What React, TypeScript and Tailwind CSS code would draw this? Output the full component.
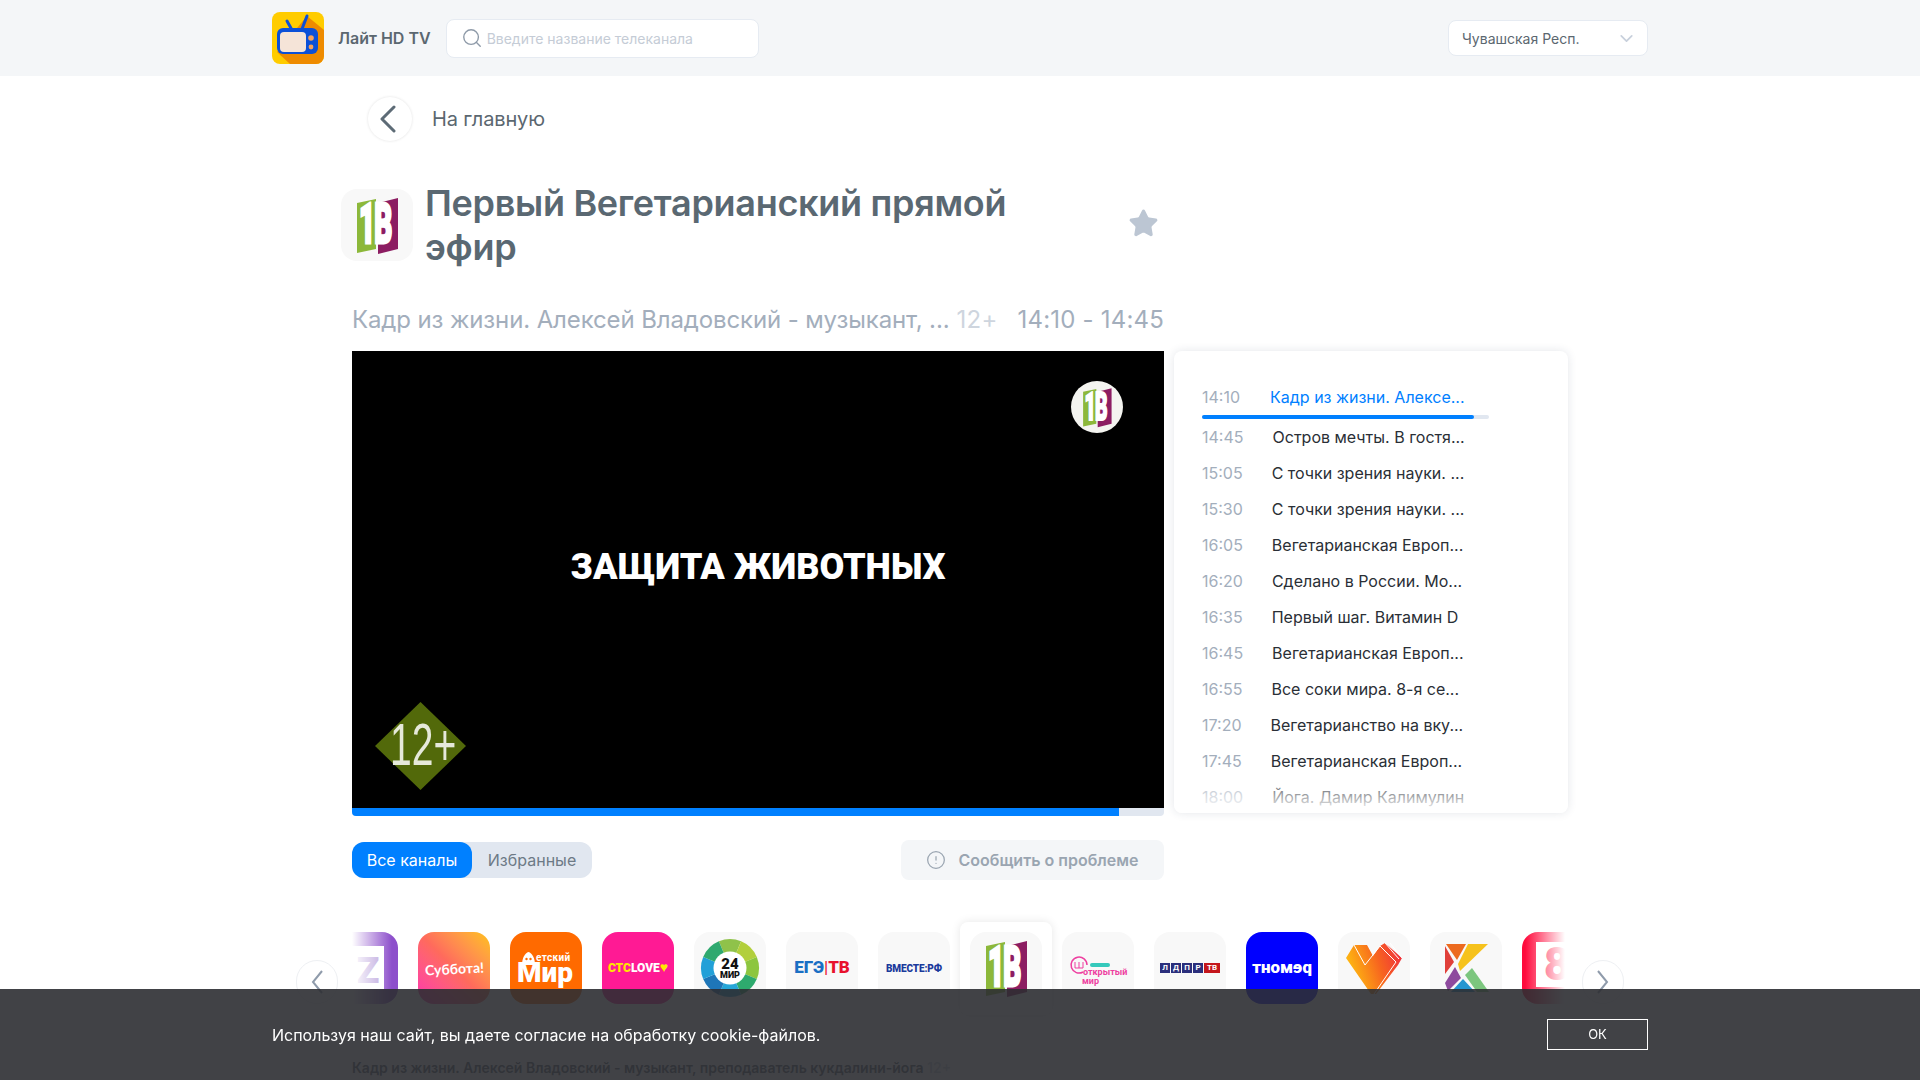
import React from 'react';
import { Search, ChevronDown, Star, CircleAlert } from 'lucide-react';

const schedule = [
  ['14:45', 'Остров мечты. В гостя...'],
  ['15:05', 'С точки зрения науки. ...'],
  ['15:30', 'С точки зрения науки. ...'],
  ['16:05', 'Вегетарианская Европ...'],
  ['16:20', 'Сделано в России. Мо...'],
  ['16:35', 'Первый шаг. Витамин D'],
  ['16:45', 'Вегетарианская Европ...'],
  ['16:55', 'Все соки мира. 8-я се...'],
  ['17:20', 'Вегетарианство на вку...'],
  ['17:45', 'Вегетарианская Европ...'],
  ['18:00', 'Йога. Дамир Калимулин'],
];

function AppLogo() {
  return (
    <svg width="52" height="52" viewBox="0 0 52 52" className="shrink-0 rounded-lg">
      <rect width="52" height="52" fill="#ffcc00" />
      <path d="M35 4 L52 18 V52 H18 L5 40 Z" fill="#ee8b00" />
      <path d="M15 9 L20 18 M35 4 L30 17" stroke="#0b50d8" strokeWidth="3" strokeLinecap="round" />
      <rect x="5" y="16" width="41" height="26" rx="6" fill="#0b50d8" />
      <rect x="8" y="20" width="26" height="20" rx="4" fill="#f5e4d8" />
      <circle cx="39" cy="26" r="2.8" fill="#f5a15c" />
      <circle cx="39" cy="35" r="2.4" fill="#f5a15c" />
    </svg>
  );
}

function VegLogo({ size = 72 }: { size?: number }) {
  return (
    <svg width={size} height={size} viewBox="0 0 72 72">
      <path d="M16 14 L35 10 V60 L16 64 Z" fill="#8cb83a" />
      <path d="M37 14 L57 9 V60 L37 65 Z" fill="#8c1d62" />
      <g transform="translate(18 54) scale(0.5 1)">
        <text fontFamily="Roboto" fontWeight="900" fontSize="56" letterSpacing="-2" fill="#fff" stroke="#fff" strokeWidth="3">1В</text>
      </g>
    </svg>
  );
}

function Tile({ dark, bg, children }: { dark?: boolean; bg?: string; children?: React.ReactNode }) {
  return (
    <div className={`relative flex h-[72px] w-[72px] shrink-0 items-center justify-center overflow-hidden rounded-[16px] ${bg ?? ''} ${dark ? '' : 'bg-[#f8f8f8]'}`}>
      {children}
    </div>
  );
}

function Ring() {
  const colors = ['#8fc24a', '#b2cf3c', '#8dc63f', '#2eaa6e', '#25a6d8', '#1e76b8', '#22a0d8', '#2fa96f'];
  return (
    <svg width="72" height="72" viewBox="0 0 72 72">
      {colors.map((c, i) => {
        const a0 = ((i * 45 - 112.5) * Math.PI) / 180;
        const a1 = ((i * 45 - 67.5) * Math.PI) / 180;
        const p0 = `${36 + 29 * Math.cos(a0)} ${36 + 29 * Math.sin(a0)}`;
        const p1 = `${36 + 29 * Math.cos(a1)} ${36 + 29 * Math.sin(a1)}`;
        return <path key={c + i} d={`M36 36 L${p0} A29 29 0 0 1 ${p1} Z`} fill={c} />;
      })}
      <circle cx="36" cy="36" r="16.5" fill="#fff" />
      <text x="36" y="37" textAnchor="middle" fontFamily="Roboto" fontWeight="900" fontSize="15" fill="#111">24</text>
      <text x="36" y="46" textAnchor="middle" fontFamily="Roboto" fontWeight="900" fontSize="9" fill="#111">МИР</text>
    </svg>
  );
}

function Heart() {
  return (
    <svg width="72" height="72" viewBox="0 0 72 72">
      <defs>
        <linearGradient id="hg" x1="0" y1="0.6" x2="1" y2="0.3">
          <stop offset="0" stopColor="#ffc50f" />
          <stop offset="0.6" stopColor="#f7641f" />
          <stop offset="1" stopColor="#f0323c" />
        </linearGradient>
      </defs>
      <path d="M8 26 L16 13 H29 L35 24 L42 14 L47 11 L64 26 L60 33 L38 62 H33 Z" fill="url(#hg)" />
      <path d="M16 13 L27 33 L42 14 M36 62 L58 30 M42 14 L58 30 M47 11 L61 27 M52 11 L64 26" stroke="#fff" strokeWidth="1" fill="none" />
    </svg>
  );
}

function KLogo() {
  return (
    <svg width="72" height="72" viewBox="0 0 72 72">
      <path d="M16 12 H36 L27 28 Z" fill="#ec6a1f" />
      <path d="M38 12 H58 L30 39 L28 32 Z" fill="#f6c21c" />
      <path d="M15 14 L24 30 L15 42 Z" fill="#e0403a" />
      <path d="M25 35 L31 46 L18 59 L15 51 Z" fill="#8e4a9e" />
      <path d="M42 36 L59 60 H47 L35 43 Z" fill="#7cc67e" />
      <path d="M33 47 L45 60 H21 Z" fill="#2596d1" />
    </svg>
  );
}

export default function App() {
  return (
    <div className="relative h-screen overflow-hidden bg-white font-['Inter',sans-serif]">
      <header className="h-[76px] bg-[#f4f6f8]">
        <div className="mx-auto flex h-full w-[1376px] items-center">
          <AppLogo />
          <span className="ml-[14px] text-[16px] font-semibold text-[#5b6770]">Лайт HD TV</span>
          <div className="ml-[15px] flex h-[39px] w-[313px] items-center rounded-lg border border-[#e6ebf2] bg-white pl-[14px]">
            <Search size={22} strokeWidth={1.5} className="text-[#8e9aa8]" />
            <span className="ml-[4px] text-[14px] text-[#c5ccd6]">Введите название телеканала</span>
          </div>
          <div className="ml-auto flex h-[36px] w-[200px] items-center justify-between rounded-lg border border-[#e6ebf2] bg-white pl-[13px] pr-[10px]">
            <span className="text-[14px] text-[#5b6770]">Чувашская Респ.</span>
            <ChevronDown size={21} className="text-[#c8d0dc]" />
          </div>
        </div>
      </header>

      <main className="mx-auto w-[1216px]">
        <div className="ml-[16px] mt-[21px] flex items-center">
          <button className="flex h-[44px] w-[44px] items-center justify-center rounded-full bg-white pr-[4px] shadow-[0_0_3px_rgba(0,0,0,0.12)]">
            <svg width="18" height="28" viewBox="0 0 18 28" fill="none" stroke="#5d6b76" strokeWidth="3" strokeLinecap="round" strokeLinejoin="round">
              <path d="M15 2 L3 14 L15 26" />
            </svg>
          </button>
          <span className="-mt-[1px] ml-[20px] text-[20px] tracking-[-0.15px] text-[#5b6770]">На главную</span>
        </div>

        <div className="relative mt-[40px] flex h-[88px] w-[812px] items-center">
          <div className="-ml-[11px] flex h-[72px] w-[72px] shrink-0 items-center justify-center rounded-[16px] bg-[#f8f8f8]">
            <VegLogo />
          </div>
          <h1 className="ml-[12px] w-[620px] text-[36px] font-semibold leading-[44px] tracking-[-0.3px] text-[#5a6872]">Первый Вегетарианский прямой эфир</h1>
          <Star size={31} fill="#bcc6d3" strokeWidth={1.5} className="ml-auto mr-[5px] -mt-[4px] text-[#bcc6d3]" />
        </div>

        <div className="mt-[35px] flex h-[32px] w-[812px] items-center text-[24px] leading-[32px] text-[#a3aebc]">
          <span className="tracking-[-0.12px]">Кадр из жизни. Алексей Владовский - музыкант, ...</span>
          <span className="ml-[7px] tracking-[0.3px] text-[#ced5de]">12+</span>
          <span className="ml-auto tracking-[0.2px]">14:10 - 14:45</span>
        </div>

        <div className="mt-[15px] flex gap-[10px]">
          <div className="w-[812px]">
            <div className="relative h-[457px] overflow-hidden bg-black">
              <div className="absolute left-0 right-0 top-[192px] text-center font-['Roboto',sans-serif] text-[36px] font-black leading-[48px] text-white">ЗАЩИТА ЖИВОТНЫХ</div>
              <div className="absolute left-[719px] top-[30px] flex h-[52px] w-[52px] items-center justify-center rounded-full bg-[#f4f4f0]">
                <VegLogo size={50} />
              </div>
              <svg width="91" height="88" viewBox="0 0 91 88" className="absolute left-[23px] top-[351px]">
                <path d="M45.5 0 L91 44 L45.5 88 L0 44 Z" fill="#52690a" />
              </svg>
              <div className="absolute left-[38px] top-[364px] origin-left scale-x-[0.65] font-['Liberation_Sans',sans-serif] text-[60px] leading-[60px] text-[#e6e9da]">12+</div>
            </div>
            <div className="h-[8px] overflow-hidden rounded-b bg-[#e1e7f0]">
              <div className="h-full w-[767px] bg-[#0080ff]" />
            </div>

            <div className="mt-[24px] flex items-center justify-between">
              <div className="flex h-[36px] w-[240px] rounded-xl bg-[#e1e7f0] text-[16px]">
                <button className="w-[120px] rounded-xl bg-[#0080ff] text-white">Все каналы</button>
                <button className="flex-1 text-[#6d7a86]">Избранные</button>
              </div>
              <button className="flex h-[40px] w-[263px] items-center justify-center rounded-lg bg-[#f4f6f8] text-[16px] font-semibold text-[#9aa5b1]">
                <CircleAlert size={20} strokeWidth={1.5} className="mr-[12px]" />
                Сообщить о проблеме
              </button>
            </div>
          </div>

          <aside className="relative h-[462px] w-[394px] overflow-hidden rounded-lg bg-white pl-[28px] pt-[28px] shadow-[0_0_10px_rgba(30,50,80,0.12)]">
            <div className="flex h-[36px] items-center text-[16px]">
              <span className="text-[#a3aebc]">14:10</span>
              <span className="ml-[30px] text-[#0080ff]">Кадр из жизни. Алексе...</span>
            </div>
            <div className="h-[4px] w-[287px] rounded-full bg-[#e1e7f0]">
              <div className="h-full w-[272px] rounded-full bg-[#0080ff]" />
            </div>
            {schedule.map(([time, title]) => (
              <div key={time} className="flex h-[36px] items-center text-[16px]">
                <span className="text-[#a3aebc]">{time}</span>
                <span className="ml-[29px] text-[#2a2f36]">{title}</span>
              </div>
            ))}
            <div className="absolute bottom-0 left-0 right-0 h-[36px] bg-gradient-to-t from-white to-white/10" />
          </aside>
        </div>

        <div className="relative mt-[32px]">
          <div className="relative w-[1213px] overflow-hidden pb-[21px] pt-[20px]">
            <div className="-ml-[26px] flex gap-[20px]">
              <Tile dark bg="bg-[#8d4fcb]">
                <div className="absolute bottom-[15px] left-0 top-[14px] flex w-[58px] items-center justify-center bg-white font-['Roboto',sans-serif] text-[37px] font-black text-[#b398d8]">
                  <span className="ml-[26px] mt-[7px]">Z</span>
                </div>
              </Tile>
              <Tile dark bg="bg-gradient-to-tr from-[#ff2eb0] via-[#ff6a5c] to-[#ffc107]">
                <span className="-rotate-3 font-['Lato',sans-serif] text-[14px] font-bold text-white">Суббота!</span>
              </Tile>
              <Tile dark bg="bg-[#ff6a00]">
                <div className="relative h-full w-full font-['Roboto',sans-serif] text-white">
                  <svg width="72" height="72" viewBox="0 0 72 72" className="absolute left-0 top-0">
                    <path d="M12 33 C12 26 15 21 18.5 20 C22 21 25 26 25 33 Z" fill="#fff" />
                    <circle cx="16.5" cy="27" r="1.2" fill="#ff6a00" />
                    <circle cx="20.5" cy="27" r="1.2" fill="#ff6a00" />
                  </svg>
                  <span className="absolute left-[26px] top-[21px] text-[10px] font-bold leading-[10px] tracking-[0.4px]">етский</span>
                  <span className="absolute left-[7px] top-[31px] text-[28px] font-black leading-[20px]">Мир</span>
                </div>
              </Tile>
              <Tile dark bg="bg-[#ff1a94]">
                <span className="font-['Roboto',sans-serif] text-[12px] font-black">
                  <span className="text-[#ffe600]">СТС</span>
                  <span className="text-white">LOVE</span>
                  <span className="text-[14px] leading-none text-[#ffe600]">♥</span>
                </span>
              </Tile>
              <Tile>
                <Ring />
              </Tile>
              <Tile>
                <span className="font-['Roboto',sans-serif] text-[17px] font-black">
                  <span className="text-[#1a6fc4]">ЕГЭ</span>
                  <span className="font-normal text-[#e8112d]">|</span>
                  <span className="text-[#e8112d]">ТВ</span>
                </span>
              </Tile>
              <Tile>
                <span className="font-['Roboto',sans-serif] text-[10px] font-black tracking-[-0.1px] text-[#1b3a9c]">ВМЕСТЕ:РФ</span>
              </Tile>
              <div className="relative">
                <div className="absolute -bottom-[11px] -left-[10px] -right-[10px] -top-[10px] rounded-lg bg-white shadow-[0_0_10px_rgba(0,0,0,0.1)]" />
                <Tile>
                  <VegLogo />
                </Tile>
              </div>
              <Tile>
                <div className="relative h-full w-full font-['Roboto',sans-serif] text-[9px] font-bold leading-[9px] text-[#ee3fa0]">
                  <svg width="72" height="72" viewBox="0 0 72 72" className="absolute left-0 top-0">
                    <path d="M21 40 A8 8 0 1 1 25 33" fill="none" stroke="#ee3fa0" strokeWidth="1.5" />
                    <path d="M13 30 V36 H21 V30 M17 30 V36" fill="none" stroke="#ee3fa0" strokeWidth="1" />
                    <rect x="28" y="31" width="20" height="4" rx="2" fill="#35c9bb" />
                  </svg>
                  <span className="absolute left-[21px] top-[36px]">открытый</span>
                  <span className="absolute left-[20px] top-[45px]">мир</span>
                </div>
              </Tile>
              <Tile>
                <div className="flex gap-[1px] font-['Roboto',sans-serif] text-[8px] font-bold text-white">
                  {['Л', 'Д', 'П', 'Р'].map((c) => (
                    <span key={c} className="flex h-[10px] w-[10px] items-center justify-center bg-[#2b2f7c]">{c}</span>
                  ))}
                  <span className="flex h-[10px] w-[16px] items-center justify-center bg-[#c4161c]">ТВ</span>
                </div>
              </Tile>
              <Tile dark bg="bg-[#0000ff]">
                <span className="-scale-x-100 font-['Roboto',sans-serif] text-[17px] font-black text-white">ремонт</span>
              </Tile>
              <Tile>
                <Heart />
              </Tile>
              <Tile>
                <KLogo />
              </Tile>
              <Tile dark bg="bg-[#ff0a3c]">
                <div className="absolute bottom-[17px] left-[14px] right-0 top-[10px] flex items-center justify-center bg-white font-['Roboto',sans-serif] text-[46px] font-black text-[#ff0a3c]">
                  <span className="-ml-[16px]">8</span>
                </div>
              </Tile>
            </div>
            <div className="absolute bottom-0 left-0 top-0 w-[40px] bg-gradient-to-r from-white to-white/0" />
            <div className="absolute bottom-0 right-0 top-0 w-[40px] bg-gradient-to-l from-white to-white/0" />
          </div>
          <button className="absolute -left-[56px] top-[48px] flex h-[44px] w-[42px] items-center justify-center rounded-full border border-[#eef0f3] bg-white">
            <svg width="14" height="28" viewBox="0 0 14 28" fill="none" stroke="#8f9bab" strokeWidth="2"><path d="M12 3 L3 14 L12 25" /></svg>
          </button>
          <button className="absolute left-[1230px] top-[48px] flex h-[44px] w-[42px] items-center justify-center rounded-full border border-[#eef0f3] bg-white">
            <svg width="14" height="28" viewBox="0 0 14 28" fill="none" stroke="#8f9bab" strokeWidth="2"><path d="M2 3 L11 14 L2 25" /></svg>
          </button>
        </div>

        <div className="mt-[31px] text-[14px] font-semibold leading-[24px] text-[#5a6872]">
          Кадр из жизни. Алексей Владовский - музыкант, преподаватель кукдалини-йога <span className="text-[#ced5de]">12+</span>
        </div>
      </main>

      <div className="fixed bottom-0 left-0 right-0 h-[91px] bg-[#2c2d32]/90">
        <div className="mx-auto flex h-full w-[1376px] items-center justify-between">
          <span className="text-[16px] text-white">Используя наш сайт, вы даете согласие на обработку cookie-файлов.</span>
          <button className="h-[31px] w-[101px] border border-white text-[13px] text-white">ОК</button>
        </div>
      </div>
    </div>
  );
}
